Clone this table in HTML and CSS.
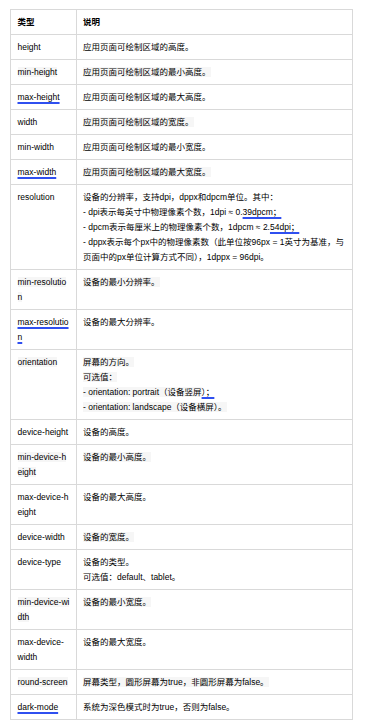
FILE: index.html
```html
<!DOCTYPE html>
<html lang="zh">
<head>
<meta charset="utf-8">
<link rel="stylesheet" href="styles.css">
</head>
<body>
<table class="spec">
  <colgroup><col class="c1"><col class="c2"></colgroup>
  <thead>
    <tr><th>类型</th><th>说明</th></tr>
  </thead>
  <tbody>
    <tr><td>height</td><td>应用页面可绘制区域的高度。</td></tr>
    <tr><td><span class="hl">min-height</span></td><td><span class="hl">应用页面可绘制区域的最小高度。</span></td></tr>
    <tr><td><span class="ul">max-height</span></td><td>应用页面可绘制区域的最大高度。</td></tr>
    <tr><td>width</td><td><span class="hl">应用页面可绘制区域的宽度。</span></td></tr>
    <tr><td>min-width</td><td>应用页面可绘制区域的最小宽度。</td></tr>
    <tr><td><span class="ul">max-width</span></td><td><span class="hl">应用页面可绘制区域的最大宽度。</span></td></tr>
    <tr><td>resolution</td><td>设备的分辨率，支持dpi，dppx和dpcm单位。其中：<br>- dpi表示每英寸中物理像素个数，1dpi ≈ 0.<span class="ul">39dpcm；</span><br>- dpcm表示每厘米上的物理像素个数，1dpcm ≈ 2.<span class="ul">54dpi；</span><br>- dppx表示每个px中的物理像素数（此单位按96px = 1英寸为基准，与页面中的px单位计算方式不同），1dppx = 96dpi。</td></tr>
    <tr><td><span class="hl">min-resolution</span></td><td><span class="hl">设备的最小分辨率。</span></td></tr>
    <tr><td><span class="ul">max-resolution</span></td><td>设备的最大分辨率。</td></tr>
    <tr><td><span class="hl">orientation</span></td><td><span class="hl">屏幕的方向。</span><br><span class="hl">可选值：</span><br><span class="hl">- orientation: portrait（设备竖屏</span><span class="ul">）；</span><br><span class="hl">- orientation: landscape（设备横屏）。</span></td></tr>
    <tr><td>device-height</td><td>设备的高度。</td></tr>
    <tr><td><span class="hl">min-device-height</span></td><td><span class="hl">设备的最小高度。</span></td></tr>
    <tr><td>max-device-height</td><td>设备的最大高度。</td></tr>
    <tr><td>device-width</td><td><span class="hl">设备的宽度。</span></td></tr>
    <tr><td>device-type</td><td>设备的类型。<br>可选值：default、tablet。</td></tr>
    <tr><td><span class="hl">min-device-width</span></td><td><span class="hl">设备的最小宽度。</span></td></tr>
    <tr><td>max-device-width</td><td>设备的最大宽度。</td></tr>
    <tr><td><span class="hl">round-screen</span></td><td><span class="hl">屏幕类型，圆形屏幕为true，非圆形屏幕为false。</span></td></tr>
    <tr><td><span class="ul">dark-mode</span></td><td>系统为深色模式时为true，否则为false。</td></tr>
  </tbody>
</table>
</body>
</html>
```
FILE: styles.css
```css
html, body {
  margin: 0;
  padding: 0;
  background: #ffffff;
}
body {
  padding: 9px 14px 0 10px;
  font-family: "Liberation Sans", Arial, "Noto Sans CJK SC", sans-serif;
  font-size: 8.5px;
  line-height: 15px;
  color: #000000;
}
.spec {
  width: 343px;
  border-collapse: collapse;
  table-layout: fixed;
}
.spec .c1 { width: 65.5px; }
.spec th,
.spec td {
  border: 1px solid #d9d9d9;
  padding: 5px 6px 4px 6.5px;
  text-align: left;
  vertical-align: top;
  word-break: break-all;
  overflow-wrap: anywhere;
}
.spec th {
  font-weight: bold;
  color: #000;
}
.hl {
  background: #f6f6f6;
}
.ul {
  text-decoration: underline;
  text-decoration-color: #2f4ff0;
  text-decoration-thickness: 2px;
  text-underline-offset: 2px;
}
```
